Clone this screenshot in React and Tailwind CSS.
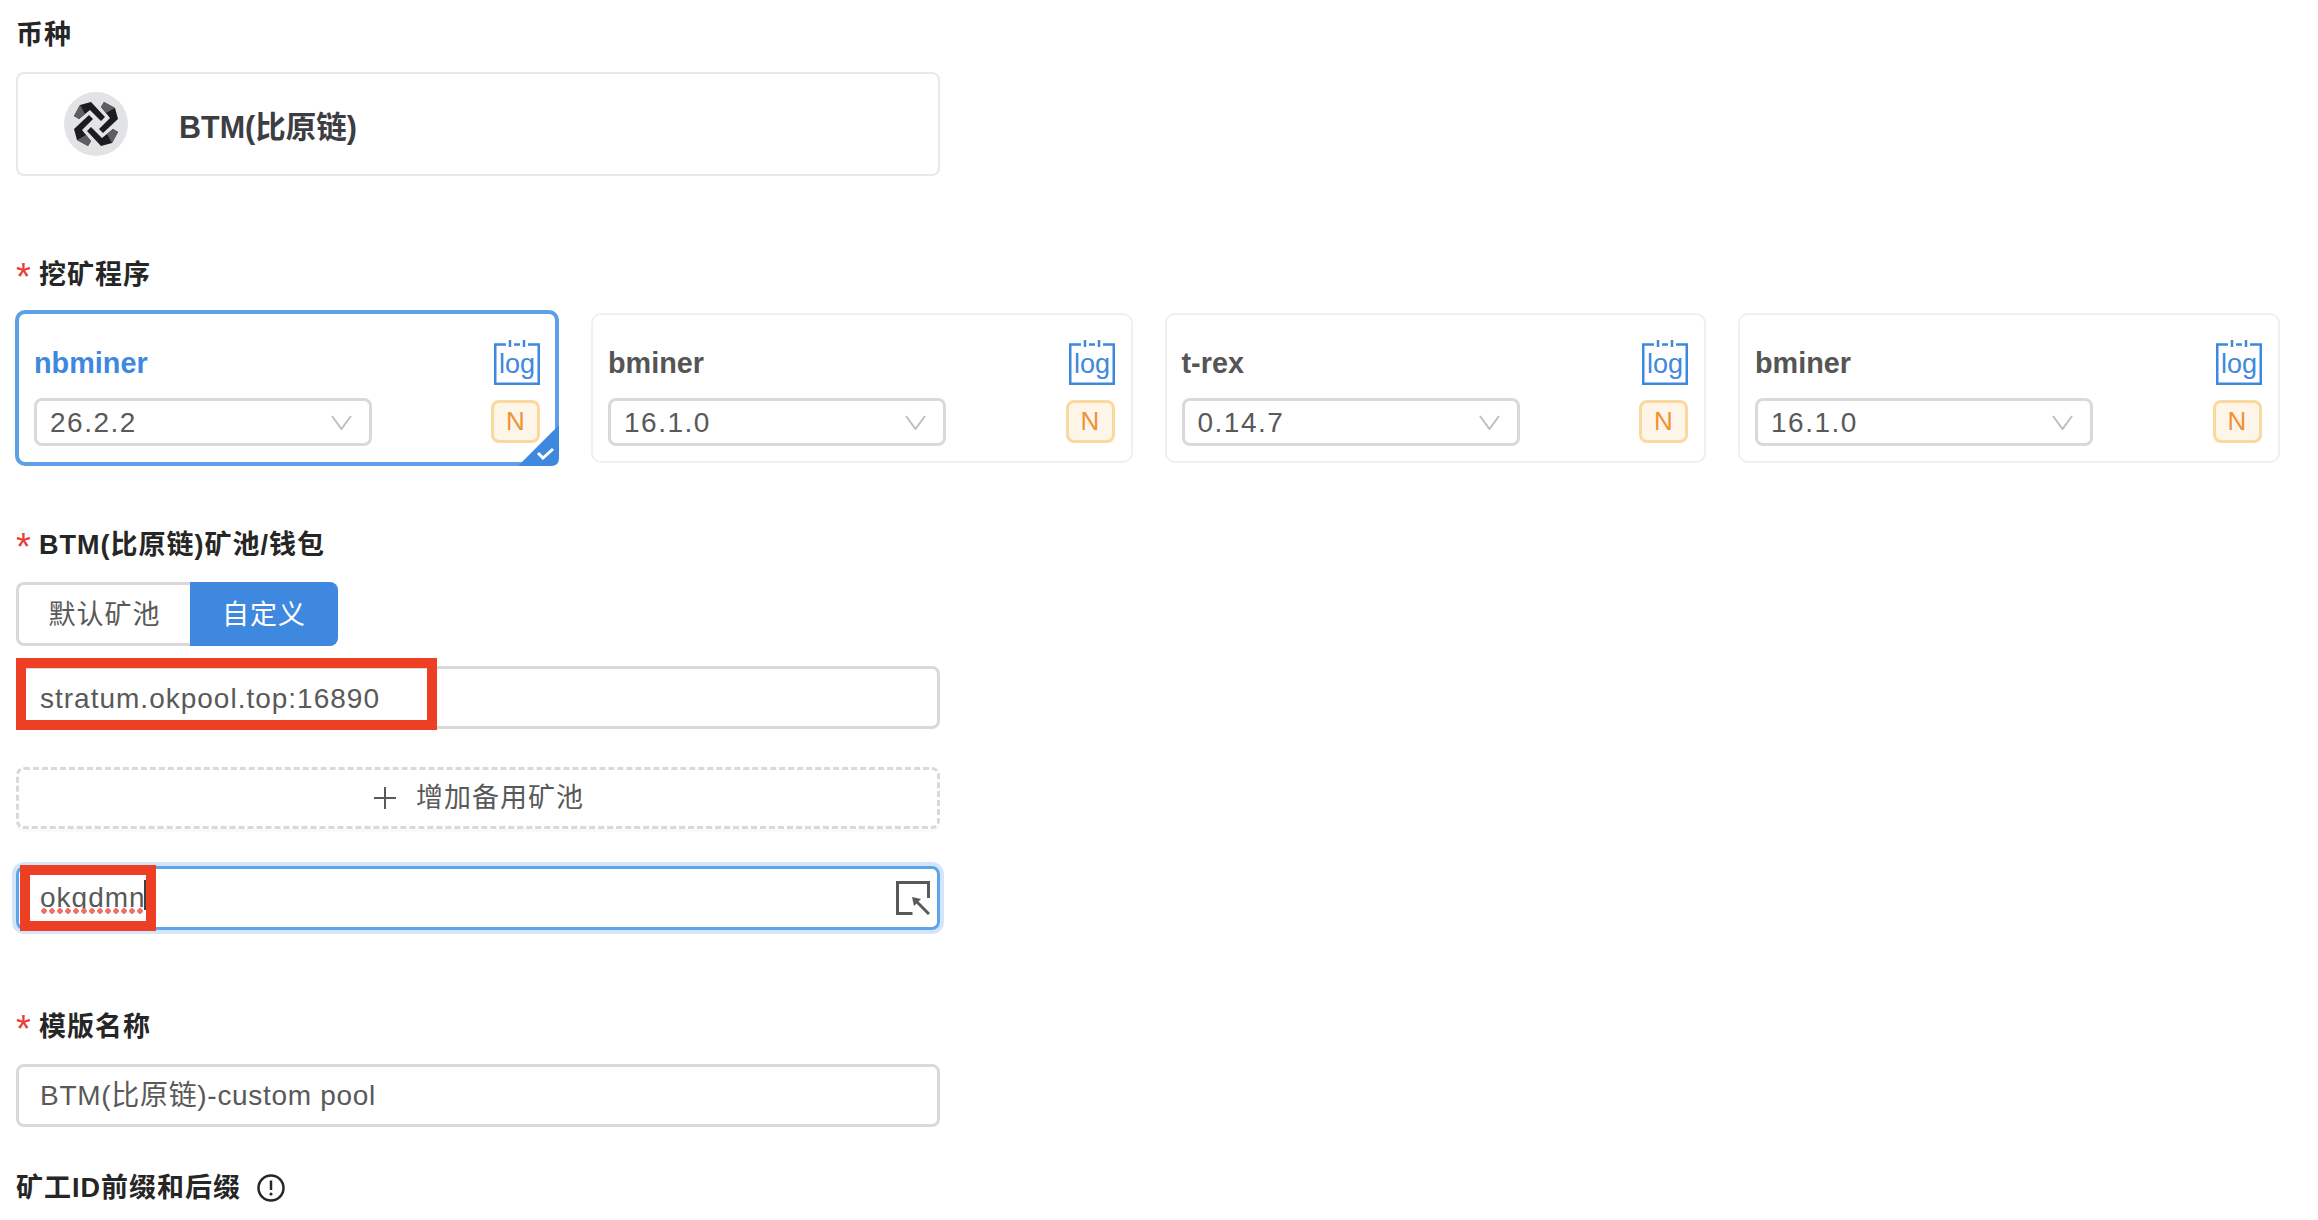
const FONT = "font-['Liberation_Sans','Noto_Sans_CJK_SC',sans-serif]";

const miners = [
  { name: 'nbminer', version: '26.2.2', selected: true },
  { name: 'bminer', version: '16.1.0' },
  { name: 't-rex', version: '0.14.7' },
  { name: 'bminer', version: '16.1.0' },
];

function Label({ children, required, className = '' }) {
  return (
    <div className={`flex h-9 items-center text-[27px] leading-9 font-semibold tracking-[1px] text-[#262626] ${className}`}>
      {required && <span className="mr-[8px] h-9 w-[15px] pt-[2px] text-[38px] leading-9 font-normal tracking-normal text-[#e8403a]">*</span>}
      {children}
    </div>
  );
}

function BtmLogo() {
  const arm = '-5,-22 -16,-19 -22,-8 -17,-5 -6,-14 5,-3 9,-7';
  const facet = '-16,-19 -22,-8 -17,-5 -11,-10';
  return (
    <svg width="64" height="64" viewBox="-32 -32 64 64">
      <circle r="32" fill="#e2e3e5" />
      {[0, 90, 180, 270].map((r) => (
        <g key={r} transform={`rotate(${r})`}>
          <polygon points={arm} fill="#1c1c1e" />
          <polygon points={facet} fill="#5f5f61" />
        </g>
      ))}
    </svg>
  );
}

function LogIcon() {
  return (
    <svg width="46" height="45" viewBox="0 0 46 45" className="block">
      <path d="M12 4.5H1.25V43.75H44.75V4.5H34" fill="none" stroke="#3f88e0" strokeWidth="2.5" />
      <path d="M16 0V7M30 0V7M20 4.5H26" fill="none" stroke="#3f88e0" strokeWidth="2.5" />
      <text x="23" y="33" textAnchor="middle" fontSize="27" fill="#3f88e0" fontFamily="Liberation Sans, sans-serif">log</text>
    </svg>
  );
}

function MinerCard({ name, version, selected }) {
  return (
    <div
      className={`relative flex justify-between bg-white pl-[15px] ${
        selected
          ? 'h-[156px] w-[544px] rounded-[10px] border-4 border-[#5ea0e8] pt-[26px] pr-[15px]'
          : 'h-[150px] w-[541.5px] rounded-[10px] border-2 border-[#f0f0f0] pt-[25px] pr-4'
      }`}
    >
      <div className="w-[338px]">
        <div className={`h-[46px] text-[28.8px] leading-[46px] font-bold ${selected ? 'text-[#3f88e0]' : 'text-[#555555]'}`}>{name}</div>
        <div className="mt-3 flex h-12 items-center justify-between rounded-lg border-[3px] border-[#d9d9d9] pt-px pl-[13px] pr-[17px] text-[28px] tracking-[1.5px] text-[#595959]">
          {version}
          <svg width="21" height="15" viewBox="0 0 21 15">
            <path d="M1 1L10.5 14L20 1" fill="none" stroke="#bfbfbf" strokeWidth="2" />
          </svg>
        </div>
      </div>
      <div className="flex w-[49px] flex-col items-end">
        <LogIcon />
        <div className="mt-[15px] flex h-[43px] w-[49px] items-center justify-center rounded-lg border-[3px] border-[#fbd99e] bg-[#fdf5e8] text-[26px] text-[#ee9236]">N</div>
      </div>
      {selected && (
        <svg width="41" height="41" viewBox="0 0 41 41" className="absolute -right-1 -bottom-1">
          <path d="M41 0V33Q41 41 33 41H0Z" fill="#3f88e0" />
          <path d="M20 28L25 33L35 24" fill="none" stroke="#ffffff" strokeWidth="3" />
        </svg>
      )}
    </div>
  );
}

export default function App() {
  return (
    <div className={`h-[1220px] w-[2318px] overflow-hidden bg-white pt-4 pl-4 ${FONT}`}>
      <Label className="pt-[2px]">币种</Label>
      <div className="mt-5 flex h-[104px] w-[924px] items-center rounded-lg border-2 border-[#e8e8e8] pl-[46px]">
        <BtmLogo />
        <span className="ml-[51px] pt-[7px] text-[30.5px] font-semibold text-[#3c3e44]">BTM(比原链)</span>
      </div>

      <Label required className="mt-20 pt-[2px]">挖矿程序</Label>
      <div className="mt-[18px] -ml-px flex items-center gap-8">
        {miners.map((m, i) => (
          <MinerCard key={i} {...m} />
        ))}
      </div>

      <Label required className="mt-[61px]">BTM(比原链)矿池/钱包</Label>
      <div className="mt-[19px] flex h-16 w-[322px] text-[27px] tracking-[1px]">
        <div className="flex w-[174px] items-center justify-center rounded-l-lg border-[3px] border-r-0 border-[#d9d9d9] pt-[2px] text-[#595959]">默认矿池</div>
        <div className="flex w-[148px] items-center justify-center rounded-r-lg bg-[#3f88e0] pt-[2px] text-white">自定义</div>
      </div>

      <div className="relative mt-5 flex h-[63px] w-[924px] items-center rounded-lg border-[3px] border-[#d9d9d9] pt-[2px] pl-[21px] text-[28px] tracking-[1px] text-[#595959]">
        stratum.okpool.top:16890
        <div className="absolute -top-[11px] -left-[3px] h-[72px] w-[421px] border-[10px] border-[#ee3f24]" />
      </div>

      <div className="mt-[38px] flex h-[62px] w-[924px] items-center justify-center rounded-lg border-[3px] border-dashed border-[#d9d9d9] pl-[2px] text-[27px] tracking-[1px] text-[#595959] shadow-[0_3px_0_#fafafa]">
        <svg width="22" height="22" viewBox="0 0 22 22" className="mr-5">
          <path d="M0 11H22M11 0V22" stroke="#595959" strokeWidth="2" />
        </svg>
        增加备用矿池
      </div>

      <div className="relative mt-[37px] flex h-16 w-[924px] items-center justify-between rounded-lg border-[3px] border-[#5ea4ea] pr-[7px] pl-[21px] text-[28px] tracking-[1px] text-[#595959] shadow-[0_0_0_4px_#d5e5f9]">
        <span>okqdmn</span>
        <svg width="34" height="34" viewBox="0 0 34 34">
          <path d="M16.5 32.5H1.5V1.5H32.5V17" fill="none" stroke="#595959" strokeWidth="3" />
          <path d="M33 33L20 20" fill="none" stroke="#595959" strokeWidth="3" />
          <path d="M16 16L25 18L18 25Z" fill="#595959" />
        </svg>
        <div className="absolute top-[39px] left-[21px] h-[6px] w-[104px] bg-[radial-gradient(circle,#f07067_2.5px,transparent_3px)] bg-[length:8px_6px]" />
        <div className="absolute -top-1 left-px h-[66px] w-[136px] border-[10px] border-[#ee3f24]" />
        <div className="absolute top-[11px] left-[125px] h-[30px] w-[2px] bg-[#404040]" />
      </div>

      <Label required className="mt-[79px]">模版名称</Label>
      <div className="mt-[19px] flex h-[63px] w-[924px] items-center rounded-lg border-[3px] border-[#d9d9d9] pt-px pl-[21px] text-[28px] tracking-[0.7px] text-[#595959]">
        BTM(比原链)-custom pool
      </div>

      <Label className="mt-[43px]">
        矿工ID前缀和后缀
        <svg width="28" height="28" viewBox="0 0 28 28" className="ml-4">
          <circle cx="14" cy="14" r="12.5" fill="none" stroke="#262626" strokeWidth="2.5" />
          <path d="M14 6.5V16" stroke="#262626" strokeWidth="2.5" />
          <circle cx="14" cy="20" r="1.6" fill="#262626" />
        </svg>
      </Label>
    </div>
  );
}
